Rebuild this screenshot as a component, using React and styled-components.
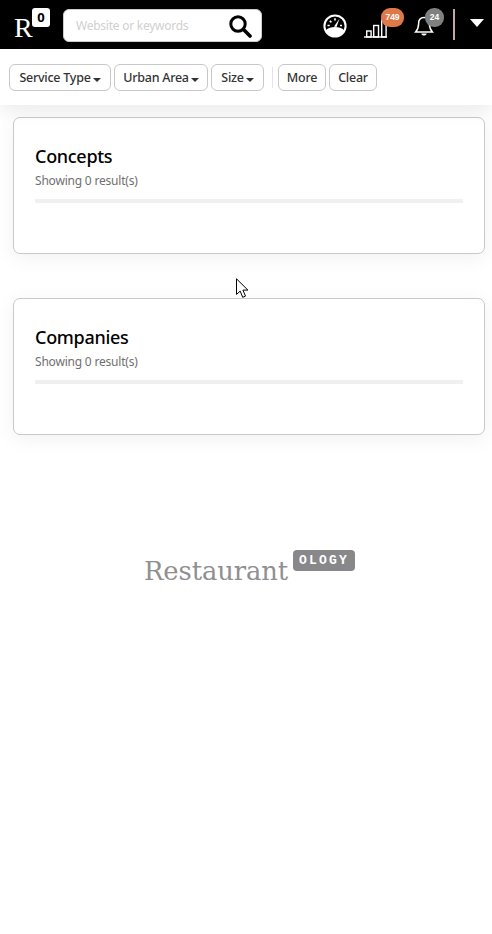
import React from "react";
import styled, { createGlobalStyle } from "styled-components";

const Global = createGlobalStyle`
  html, body { margin: 0; padding: 0; background: #fff; }
  body { font-family: "Noto Sans", "Liberation Sans", sans-serif; }
  * { box-sizing: border-box; }
`;
const Page = styled.div`
  width: 492px; height: 934px; overflow: hidden; position: relative; background: #fff;
`;
const Header = styled.header`
  height: 49px; background: #000; display: flex; align-items: center; padding-left: 14px;
`;
const Brand = styled.div`
  width: 37px; height: 38px; position: relative; flex: none; margin-top: -1px;
`;
const BrandR = styled.span`
  position: absolute; left: 0; top: 7px; color: #fff; font: 28px/32px "Liberation Serif", serif;
`;
const BrandZero = styled.span`
  position: absolute; left: 18px; top: 3px; width: 18px; height: 19px; border-radius: 3px; background: #fff; color: #000;
  font: 700 13px/18px "Noto Sans", sans-serif; text-align: center;
`;
const Search = styled.div`
  width: 199px; height: 33px; margin: 2px 0 0 12px; flex: none; background: #fff; border: 1px solid #ccc; border-radius: 6px;
  display: flex; align-items: center; justify-content: space-between; padding: 0 9px 0 12px;
`;
const Placeholder = styled.span`
  font-size: 12px; color: #d0d0d0; letter-spacing: -0.25px;
`;
const Tools = styled.div`
  margin-left: auto; display: flex; align-items: center; padding: 2px 8px 0 0;
`;
const Tool = styled.div`
  position: relative; width: ${p => p.$w}px; height: 26px; display: flex; align-items: center; flex: none;
`;
const Badge = styled.span`
  position: absolute; left: ${p => p.$left}px; top: ${p => p.$top}px; min-width: ${p => p.$w}px; height: 19px; padding: 0 2px;
  border-radius: 9px; background: ${p => p.$bg}; color: #fff; font: 700 8.5px/19px "Liberation Sans", sans-serif; text-align: center;
`;
const Divider = styled.div`
  width: 2px; height: 31px; background: #c4a8a2; flex: none; margin: -3px 15px 0 0;
`;
const Caret = styled.div`
  width: 0; height: 0; border-left: 7.5px solid transparent; border-right: 7.5px solid transparent; border-top: 8px solid #fff;
  margin-top: -5px;
`;
const FilterBar = styled.div`
  height: 56px; background: #fff; display: flex; align-items: flex-start; gap: 3px; padding: 15px 0 0 9px;
  box-shadow: 0 6px 16px rgba(0,0,0,.08); position: relative; z-index: 1;
`;
const FilterButton = styled.button`
  width: ${p => p.$w}px; height: 27px; padding: 1px 0 0; display: flex; align-items: center; justify-content: center; gap: 2px;
  background: #fff; border: 1px solid #c8c8c8; border-radius: 6px; color: #333; font: 500 12.5px/1 "Noto Sans", sans-serif; letter-spacing: -0.25px;
`;
const Arrow = styled.i`
  width: 0; height: 0; margin-top: 4px; border-left: 4.5px solid transparent; border-right: 4.5px solid transparent; border-top: 4px solid #333;
`;
const Sep = styled.div`
  width: 1px; height: 21px; background: #e4e4e4; margin: 3px 2px 0 5px;
`;
const Main = styled.main`
  padding: 12px 7px 0 13px; display: flex; flex-direction: column; gap: 44px;
`;
const Card = styled.section`
  height: 137px; background: #fff; border: 1px solid #c9c9c9; border-radius: 7px; padding: 26px 21px 0;
  box-shadow: 0 4px 20px rgba(0,0,0,.06);
`;
const Title = styled.h2`
  margin: 0; font: 500 18px/25px "Noto Sans", sans-serif; color: #000; letter-spacing: -0.3px;
`;
const Sub = styled.p`
  margin: 3px 0 0; font: 12px/17px "Noto Sans", sans-serif; color: #6f6f6f; letter-spacing: -0.2px;
`;
const Rule = styled.div`
  height: 4px; background: #f0f0f0; margin-top: 10px;
`;
const Logo = styled.div`
  margin: 115px 0 0 144px; display: flex; align-items: flex-start; height: 40px;
`;
const LogoWord = styled.span`
  font: 25.8px/34px "DejaVu Serif", serif; color: #909092; margin-top: 4px; letter-spacing: -0.1px;
`;
const LogoTag = styled.span`
  width: 62px; height: 21px; margin-left: 5px; border-radius: 4px; background: #88888a; color: #fff;
  font: 700 13px/21px "Liberation Mono", monospace; text-align: center; letter-spacing: 2.2px;
`;
const CursorWrap = styled.svg`
  position: absolute; left: 236px; top: 278px;
`;

const SearchIcon = () => (
  <svg width="24" height="24" viewBox="0 0 24 24" fill="none" stroke="#000" strokeLinecap="round">
    <circle cx="10" cy="10" r="7.2" strokeWidth="3" />
    <path d="M15.5 15.5 22 22" strokeWidth="3.6" />
  </svg>
);
const Gauge = () => (
  <svg width="24" height="24" viewBox="0 0 24 24">
    <circle cx="12" cy="12" r="10.6" fill="#000" stroke="#fff" strokeWidth="2" />
    <path d="M2.5 16.5C5 13.8 8.5 13 12 13s7 .8 9.5 3.5A10.5 10.5 0 0 1 12 23 10.5 10.5 0 0 1 2.5 16.5Z" fill="#fff" />
    <path d="M11 12.5 16.5 4.8 13.5 13Z" fill="#fff" />
    <path d="M4.5 11.5h2.2M6.8 6.8l1.6 1.6M12 4.2v2.4M19 11.5h-2" stroke="#fff" strokeWidth="1.6" />
  </svg>
);
const Bars = () => (
  <svg width="24" height="19" viewBox="0 0 24 19" fill="none" stroke="#fff" strokeWidth="1.4" style={{ marginTop: 5 }}>
    <path d="M0 18h23" />
    <rect x="2.7" y="12" width="4.4" height="6" />
    <rect x="9.7" y="6.5" width="4.8" height="11.5" />
    <rect x="17.7" y="1" width="4.4" height="17" />
  </svg>
);
const Bell = () => (
  <svg width="20" height="22" viewBox="0 0 20 22" fill="none" stroke="#fff" strokeWidth="1.5" style={{ marginTop: 3 }}>
    <path d="M10 1.5c-3.6 0-5.4 2.8-5.4 6.3 0 4-1 6-3 8.2h16.8c-2-2.2-3-4.2-3-8.2 0-3.5-1.8-6.3-5.4-6.3Z" />
    <path d="M7.3 17.5c.5 2.8 4.9 2.8 5.4 0Z" fill="#fff" stroke="none" />
  </svg>
);

const Filters = [["Service Type", 102], ["Urban Area", 94], ["Size", 53]];

const ResultCard = ({ title }) => (
  <Card>
    <Title>{title}</Title>
    <Sub>Showing 0 result(s)</Sub>
    <Rule />
  </Card>
);

export default function App() {
  return (
    <Page>
      <Global />
      <Header>
        <Brand>
          <BrandR>R</BrandR>
          <BrandZero>0</BrandZero>
        </Brand>
        <Search>
          <Placeholder>Website or keywords</Placeholder>
          <SearchIcon />
        </Search>
        <Tools>
          <Tool $w={41}><Gauge /></Tool>
          <Tool $w={50}>
            <Bars />
            <Badge $left={17} $top={-5} $w={23} $bg="#e0794a">749</Badge>
          </Tool>
          <Tool $w={39}>
            <Bell />
            <Badge $left={11} $top={-5} $w={19} $bg="#808080">24</Badge>
          </Tool>
          <Divider />
          <Caret />
        </Tools>
      </Header>
      <FilterBar>
        {Filters.map(([label, w]) => (
          <FilterButton key={label} $w={w}>{label}<Arrow /></FilterButton>
        ))}
        <Sep />
        <FilterButton $w={48}>More</FilterButton>
        <FilterButton $w={48}>Clear</FilterButton>
      </FilterBar>
      <Main>
        <ResultCard title="Concepts" />
        <ResultCard title="Companies" />
      </Main>
      <Logo>
        <LogoWord>Restaurant</LogoWord>
        <LogoTag>OLOGY</LogoTag>
      </Logo>
      <CursorWrap width="13" height="21" viewBox="0 0 13 21">
        <path d="M.5.8v15.6l3.7-3.3 2.5 6.2 2.8-1.2-2.6-6h5Z" fill="#fff" stroke="#000" />
      </CursorWrap>
    </Page>
  );
}
